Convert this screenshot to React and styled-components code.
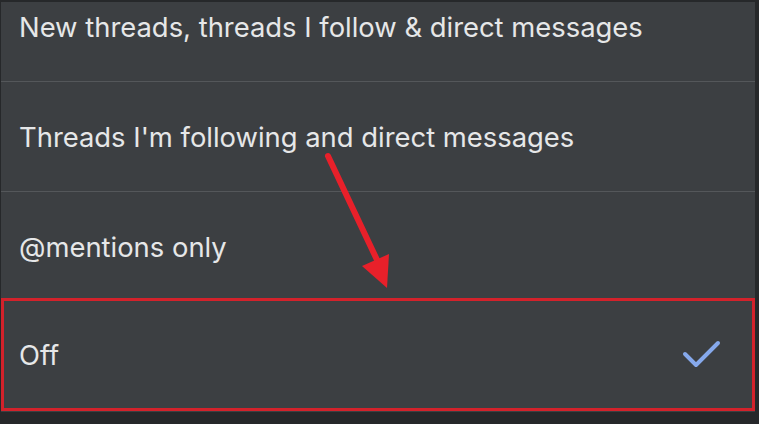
import React from "react";
import styled, { createGlobalStyle } from "styled-components";

const options = [
  { id: 1, label: "New threads, threads I follow & direct messages" },
  { id: 2, label: "Threads I'm following and direct messages" },
  { id: 3, label: "@mentions only" },
  { id: 4, label: "Off", selected: true },
];

const GlobalStyle = createGlobalStyle`
  html, body {
    margin: 0;
    padding: 0;
    background: #26282a;
  }
  #root {
    width: 759px;
    height: 424px;
  }
`;

const Frame = styled.div`
  position: relative;
  width: 759px;
  height: 424px;
  box-sizing: border-box;
  padding: 2px 4px 12px 1px;
  background: #26282a;
  overflow: hidden;
`;

const Panel = styled.div`
  height: 100%;
  background: #3c3f42;
  overflow: hidden;
`;

const List = styled.div`
  display: flex;
  flex-direction: column;
  margin-top: -30px;
`;

const Row = styled.div`
  display: flex;
  align-items: center;
  justify-content: space-between;
  box-sizing: border-box;
  height: ${(p) => (p.$selected ? "113px" : "110px")};
  padding: 0 30px 0 ${(p) => (p.$selected ? "15px" : "18px")};
  border-bottom: ${(p) => (p.$last ? "none" : "1px solid #54575a")};
  border: ${(p) => (p.$selected ? "3px solid #d3222b" : undefined)};
  margin-top: ${(p) => (p.$selected ? "-4px" : "0")};
`;

const Label = styled.span`
  font-family: Inter, "Liberation Sans", sans-serif;
  font-size: 27.4px;
  color: #e6e7e8;
`;

const Check = () => (
  <svg width="40" height="32" viewBox="0 0 40 32" style={{ marginRight: 1 }}>
    <path
      d="M4 15 L15 26 L37 4"
      fill="none"
      stroke="#86a9ec"
      strokeWidth="4"
      strokeLinecap="round"
      strokeLinejoin="round"
    />
  </svg>
);

const ArrowLayer = styled.svg`
  position: absolute;
  left: 0;
  top: 0;
  pointer-events: none;
`;

const Arrow = () => (
  <ArrowLayer width="759" height="424" viewBox="0 0 759 424">
    <line
      x1="328"
      y1="156"
      x2="378"
      y2="262"
      stroke="#e8202a"
      strokeWidth="6"
      strokeLinecap="round"
    />
    <polygon points="362,266 389,254 387,288" fill="#e8202a" />
  </ArrowLayer>
);

export default function App() {
  return (
    <>
      <GlobalStyle />
      <Frame>
        <Panel>
          <List>
            {options.map((o, i) => (
              <Row
                key={o.id}
                $selected={o.selected}
                $last={i === options.length - 1 || options[i + 1]?.selected}
              >
                <Label>{o.label}</Label>
                {o.selected && <Check />}
              </Row>
            ))}
          </List>
        </Panel>
        <Arrow />
      </Frame>
    </>
  );
}
